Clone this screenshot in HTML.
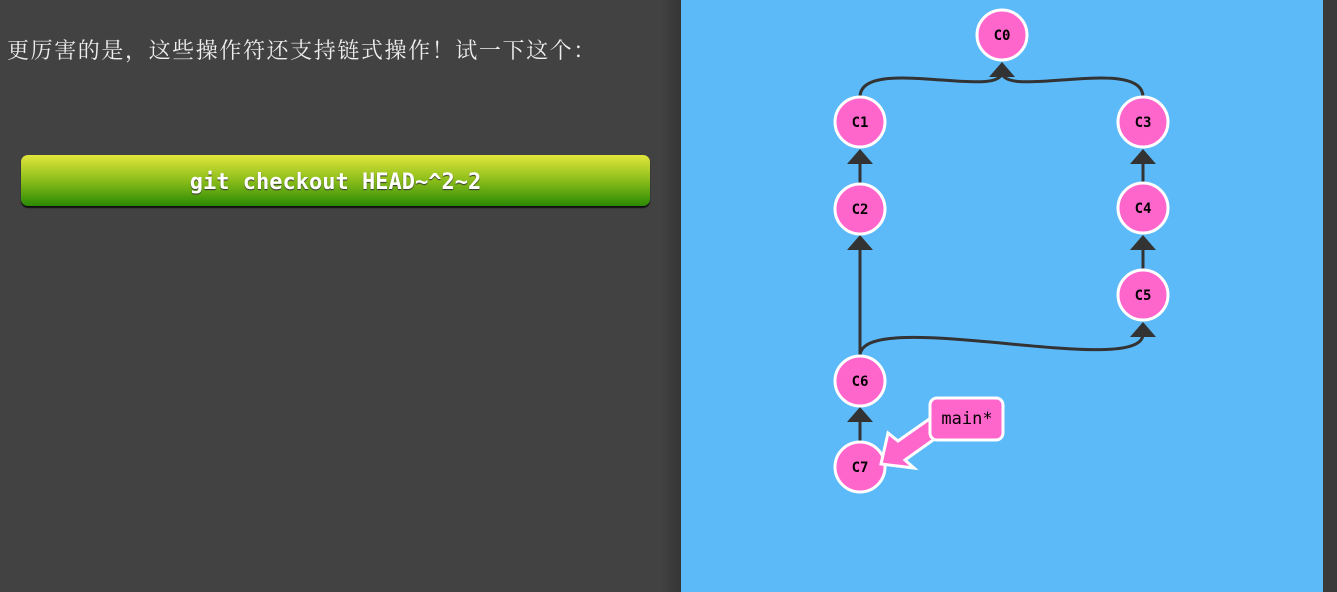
<!DOCTYPE html>
<html><head><meta charset="utf-8"><style>
html,body{margin:0;padding:0;width:1337px;height:592px;overflow:hidden;background:#424242;}
.txt{position:absolute;left:7px;top:36px;width:620px;font-family:"Noto Serif CJK SC","Noto Sans CJK SC",serif;font-size:22px;line-height:27px;color:#eee;white-space:nowrap;display:flex;}
.txt span{display:block;flex:0 0 23.6px;width:23.6px;}
.btn{position:absolute;left:21px;top:155px;width:629px;height:51px;border-radius:7px;background:linear-gradient(#e2e63c,#8bbd1a 50%,#2a8a05);box-shadow:0 2px 1px #111;color:#fff;font-family:"DejaVu Sans Mono","Liberation Mono",monospace;font-weight:bold;font-size:22px;text-align:center;line-height:55px;text-shadow:0 1px 1px #333;}
.shadow{position:absolute;left:661px;top:0;width:20px;height:592px;background:linear-gradient(90deg,rgba(0,0,0,0),rgba(0,0,0,0.2));}
.panel{position:absolute;left:681px;top:0;width:642px;height:592px;background:#5cbaf9;}
.rs{position:absolute;left:1323px;top:0;width:14px;height:592px;background:#3a3a3a;}
</style></head><body>
<div class="txt"><span>更</span><span>厉</span><span>害</span><span>的</span><span>是</span><span>，</span><span>这</span><span>些</span><span>操</span><span>作</span><span>符</span><span>还</span><span>支</span><span>持</span><span>链</span><span>式</span><span>操</span><span>作</span><span>！</span><span>试</span><span>一</span><span>下</span><span>这</span><span>个</span><span>：</span></div>
<div class="btn">git checkout HEAD~^2~2</div>
<div class="shadow"></div>
<div class="panel"></div>
<div class="rs"></div>
<svg width="1337" height="592" style="position:absolute;left:0;top:0" font-family="DejaVu Sans Mono,monospace">
<g stroke="#333" stroke-width="3" fill="none">
<path d="M860,97 C860,55 1002,100 1002,72"/>
<path d="M1143,97 C1143,55 1002,100 1002,72"/>
<path d="M860,184 L860,160"/>
<path d="M1143,183 L1143,160"/>
<path d="M1143,270 L1143,246"/>
<path d="M860,356 L860,246"/>
<path d="M860,356 C860,305 1143,380 1143,334"/>
<path d="M860,442 L860,418"/>
</g>
<g fill="#333">
<path d="M1002,62 l-13,15 h26z"/>
<path d="M860,149 l-13,15 h26z"/>
<path d="M1143,149 l-13,15 h26z"/>
<path d="M860,235 l-13,15 h26z"/>
<path d="M1143,235 l-13,15 h26z"/>
<path d="M1143,322 l-13,15 h26z"/>
<path d="M860,407 l-13,15 h26z"/>
</g>
<g fill="#ff66cc" stroke="#fff" stroke-width="3">
<circle cx="1002" cy="35" r="25"/>
<circle cx="860" cy="122" r="25"/>
<circle cx="1143" cy="122" r="25"/>
<circle cx="860" cy="209" r="25"/>
<circle cx="1143" cy="208" r="25"/>
<circle cx="1143" cy="295" r="25"/>
<circle cx="860" cy="381" r="25"/>
<circle cx="860" cy="467" r="25"/>
</g>
<g font-size="14" font-weight="bold" fill="#000" text-anchor="middle">
<text x="1002" y="40">C0</text><text x="860" y="127">C1</text><text x="1143" y="127">C3</text>
<text x="860" y="214">C2</text><text x="1143" y="213">C4</text><text x="1143" y="300">C5</text>
<text x="860" y="386">C6</text><text x="860" y="472">C7</text>
</g>
<path d="M935,415 L898,441 L888,433 L881,464 L914,468 L905,460 L943,433 Z" fill="#ff66cc" stroke="#fff" stroke-width="3"/>
<rect x="930" y="398" width="73" height="42" rx="7" fill="#ff66cc" stroke="#fff" stroke-width="3"/>
<text x="967" y="424" text-anchor="middle" font-size="17" fill="#000">main*</text>
</svg>
</body></html>
